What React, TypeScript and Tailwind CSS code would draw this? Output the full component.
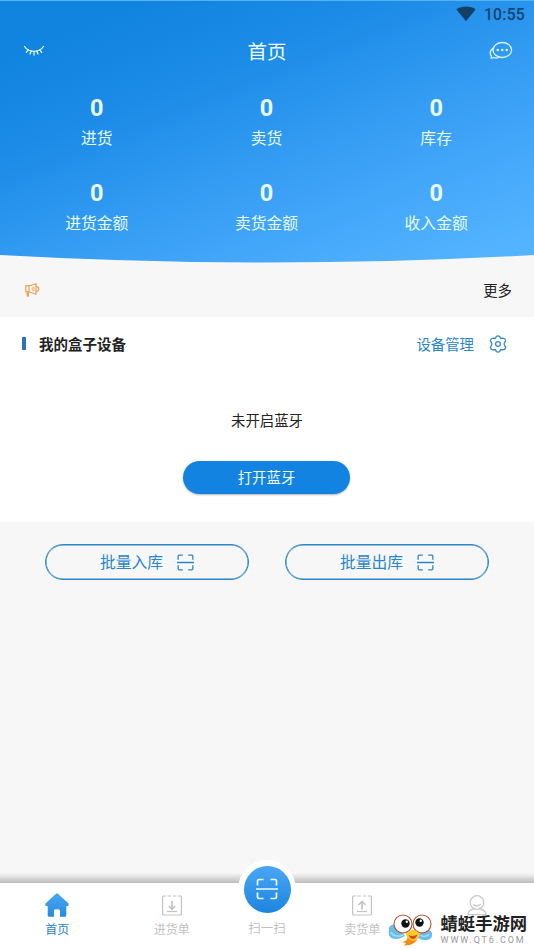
import { clsx } from "clsx";

type IconProps = { className?: string };

type Tab = {
  label: string;
  icon: React.ReactNode;
  active?: boolean;
};

const STATS = [
  { label: "进货", value: 0 },
  { label: "卖货", value: 0 },
  { label: "库存", value: 0 },
  { label: "进货金额", value: 0 },
  { label: "卖货金额", value: 0 },
  { label: "收入金额", value: 0 },
];

function ClosedEyeIcon() {
  return (
    <svg width="22" height="14" viewBox="0 0 22 14" fill="none" stroke="#e8fbff" strokeWidth="1.3" strokeLinecap="round">
      <path d="M1.5 2.500C6 8.900 16 8.900 20.500 2.500" />
      <path d="M5.300 5.800 3.300 8.300M8.300 7l-1.300 3M11 7.400v3.600M13.700 7l1.300 3M16.700 5.800 18.700 8.300" />
    </svg>
  );
}

function ChatIcon() {
  return (
    <svg width="24" height="20" viewBox="0 0 24 20" fill="none" stroke="#d9f5ff" strokeWidth="1.3" strokeLinecap="round" strokeLinejoin="round">
      <ellipse cx="13.300" cy="9" rx="9.300" ry="7.500" />
      <path d="M4.200 7.400C2.200 8.500 1.200 10 1.200 12c0 1.300.5 2.300 1.300 3.200 0 .8-.2 1.400-.5 1.900 1.100.1 2-.2 2.800-.6 1.700.7 4 .6 5.700-.5" />
      <path d="M8.700 9h.1M13.200 9h.1M17.700 9h.1" strokeWidth="2.400" />
    </svg>
  );
}

function WifiIcon() {
  return (
    <svg width="20" height="16" viewBox="0 0 20 16" fill="#123f66">
      <path d="M.3 3.300C5.800-.5 14.200-.5 19.700 3.300L10 15.200Z" />
    </svg>
  );
}

function HornIcon() {
  return (
    <svg width="15" height="14" viewBox="0 0 15 14" fill="none" stroke="#eda255" strokeWidth="1.200" strokeLinejoin="round">
      <path d="M.8 2.700H4V8.800H.8zM4 3 11 .7V11.300L4 8.800" />
      <path d="M2.200 8.800v4.300h1.200V8.800M11 3.400c3.600.6 3.600 4.600 0 5.200" />
      <path d="M9 4.200C6.500 3.700 6.500 8.300 9 7.800M9 4.500v3" strokeWidth="0.900" />
    </svg>
  );
}

function GearIcon() {
  return (
    <svg width="18" height="18" viewBox="0 0 18 18" fill="none" stroke="#3789c5" strokeWidth="1.300" strokeLinejoin="round">
      <path d="M7.300 1.500Q9 .3 10.700 1.500L11.600 3.500 14 3.200Q16.300 3.500 16.700 5.700L15.500 7.700Q14.800 9 15.500 10.300L16.700 12.300Q16.300 14.500 14 14.800L11.600 14.500 10.700 16.500Q9 17.700 7.300 16.500L6.400 14.500 4 14.800Q1.700 14.500 1.300 12.300L2.500 10.300Q3.200 9 2.500 7.700L1.300 5.700Q1.700 3.500 4 3.200L6.400 3.500Z" />
      <circle cx="9" cy="9" r="2.400" />
    </svg>
  );
}

function ScanIcon({ className }: IconProps) {
  return (
    <svg viewBox="0 0 22 22" fill="none" stroke="currentColor" strokeWidth="1.700" className={className}>
      <path d="M1.500 7.500V3Q1.500 1.500 3 1.500H7.500M14.500 1.500H19Q20.500 1.500 20.500 3V7.500M20.500 14.500V19Q20.500 20.500 19 20.500H14.500M7.500 20.500H3Q1.500 20.500 1.500 19V14.500M0 11H22" />
    </svg>
  );
}

function HomeIcon() {
  return (
    <svg width="26" height="26" viewBox="0 0 26 26">
      <defs>
        <linearGradient id="home" x1="0" y1="0" x2="0" y2="1">
          <stop stopColor="#4ba7f3" />
          <stop offset="1" stopColor="#268bdf" />
        </linearGradient>
      </defs>
      <path
        d="M12 1.700Q13 .9 14 1.700L24.300 11.200Q25.500 13.800 23.500 14H22.300V23.200Q22.300 24.700 20.800 24.700H16V18.700Q16 17.200 14.500 17.200H11.500Q10 17.200 10 18.700V24.700H5.200Q3.700 24.700 3.700 23.200V14H2.500Q.5 13.800 1.700 11.200Z"
        fill="url(#home)"
      />
    </svg>
  );
}

function OrderIcon({ up }: { up?: boolean }) {
  return (
    <svg width="20" height="21" viewBox="0 0 20 21" fill="none" stroke="#c3c3c3" strokeWidth="1.200">
      <path d="M4 1H1.500Q.6 1 .6 2V19Q.6 20 1.500 20H18.500Q19.400 20 19.400 19V2Q19.400 1 18.500 1H16M5.500 1H9M11 1H14.500" />
      <path d={up ? "M10 14.500V7M6.500 10 10 6.500 13.500 10" : "M10 6V14M6.800 11 10 14.200 13.200 11"} strokeWidth="1.700" />
      <path d="M5 16.500H15" />
    </svg>
  );
}

function PersonIcon() {
  return (
    <svg width="20" height="21" viewBox="0 0 20 21" fill="none" stroke="#c9c9c9" strokeWidth="1.300" strokeLinecap="round">
      <circle cx="10" cy="7.500" r="6.800" />
      <path d="M6.800 9.500Q10 12.500 13.200 9.500M6.500 14Q1 15.500.8 19.700H19.200Q19 15.500 13.500 14" />
    </svg>
  );
}

function DragonflyLogo() {
  return (
    <svg width="46" height="34" viewBox="0 0 46 34">
      <path d="M8 12C3 11 0 14 1 18c-2 7 6 11 16 5ZM32 18c6-4 13-1 12 4 0 6-9 7-15 2Z" fill="#69bdeb" />
      <path d="M3 19c1 4 7 5 12 3M41 21c-2 3-6 3-9 1" fill="none" stroke="#a5dcf7" strokeWidth="1.500" />
      <path d="M20 23c-1 5-2 5-6 6l4 1-2 2.500c8 0 13-3 14-9Z" fill="#f28a18" />
      <circle cx="15" cy="11" r="9" fill="#fff" stroke="#b4512a" strokeWidth="1.100" />
      <circle cx="34" cy="11" r="9" fill="#fff" stroke="#b4512a" strokeWidth="1.100" />
      <circle cx="17.500" cy="10.500" r="4.200" fill="#111" />
      <circle cx="31.500" cy="9.500" r="4.200" fill="#111" />
      <circle cx="18.800" cy="8.800" r="1.200" fill="#fff" />
      <circle cx="32.800" cy="7.800" r="1.200" fill="#fff" />
      <path d="M18 20Q21 19 23 17 26 16 28 18 31 20 32 20 31 27 25 28 18 26 18 20Z" fill="#ffc928" />
      <path d="M20.500 22Q25 24 29.500 21.500 28 26 25 26 22 26 20.500 22Z" fill="#d94a16" />
    </svg>
  );
}

function BatchButton({ label }: { label: string }) {
  return (
    <button className="flex h-9 w-[204px] items-center justify-center gap-[14px] rounded-full border-[1.5px] border-[#2a86c9] text-[15.8px] text-[#2a86c9] shadow-[inset_0_0_0_0.5px_#2a86c9]">
      <span className="pt-[2px]">{label}</span>
      <ScanIcon className="h-[17px] w-[17px]" />
    </button>
  );
}

const LEFT_TABS: Tab[] = [
  { label: "首页", icon: <HomeIcon />, active: true },
  { label: "进货单", icon: <OrderIcon /> },
];

const RIGHT_TABS: Tab[] = [
  { label: "卖货单", icon: <OrderIcon up /> },
  { label: "", icon: <PersonIcon /> },
];

function TabItem({ label, icon, active }: Tab) {
  return (
    <div className="flex flex-1 flex-col items-center pt-[9px]">
      <div className="flex h-[26px] items-center justify-center">{icon}</div>
      <span className={clsx("mt-[3px] text-[12px] leading-[18px]", active ? "text-[#2583c9]" : "text-[#c2c2c2]")}>
        {label}
      </span>
    </div>
  );
}

export default function App() {
  return (
    <div className="relative flex h-[949px] w-[534px] flex-col overflow-hidden bg-[#f7f7f7] font-[Roboto,'Noto_Sans_CJK_SC',sans-serif] text-[#222]">
      {/* Header */}
      <header className="h-[263px] shrink-0 border-t border-[#54b3f3] bg-[linear-gradient(158deg,#1184e0_12%,#1b8be7_32%,#3da2f7_66%,#53b3ff_94%)] [clip-path:path('M0_0H534V255Q267_270_0_255Z')]">
        <div className="flex h-[26px] items-center justify-end gap-[8px] pr-[9px]">
          <WifiIcon />
          <span className="pt-[2px] text-[15.8px] font-medium tracking-[0.2px] text-[#15466f]">10:55</span>
        </div>
        <div className="grid h-[48px] grid-cols-3 items-center pr-[21px] pl-[23px]">
          <ClosedEyeIcon />
          <h1 className="pt-[4px] pr-[2px] text-center text-[19.5px] text-[#effdff]">首页</h1>
          <div className="flex justify-end">
            <ChatIcon />
          </div>
        </div>
        <div className="grid grid-cols-3 gap-y-[28px] pt-[18px] pr-[13px] pl-[12px]">
          {STATS.map(({ label, value }) => (
            <div key={label} className="flex flex-col items-center text-[#e8fbff]">
              <span className="text-[23.5px] leading-[30px] font-bold">{value}</span>
              <span className="mt-[4px] text-[15.8px] leading-[23px]">{label}</span>
            </div>
          ))}
        </div>
      </header>

      {/* Notice */}
      <div className="flex h-[54px] shrink-0 items-center justify-between pr-[22px] pl-[25px]">
        <HornIcon />
        <span className="pt-[4px] text-[14.4px]">更多</span>
      </div>

      {/* Device */}
      <section className="flex h-[205px] shrink-0 flex-col items-center bg-white">
        <div className="flex h-[54px] w-full items-center pr-[27px] pl-[22px]">
          <div className="mb-px h-[13px] w-1 bg-[#2d73b8]" />
          <h2 className="ml-[13px] flex-1 pt-[3px] text-[14.5px] font-bold">我的盒子设备</h2>
          <span className="mr-[15px] pt-[3px] text-[14.4px] text-[#2a86c9]">设备管理</span>
          <GearIcon />
        </div>
        <p className="mt-[40px] text-[14.4px] leading-[22px]">未开启蓝牙</p>
        <button className="mt-[28px] mr-px h-[33px] w-[167px] rounded-full bg-[#1383e1] pt-[3px] text-[14.4px] text-[#effaff] shadow-[0_1px_2px_rgba(0,0,0,0.3)]">
          打开蓝牙
        </button>
      </section>

      <div className="flex justify-center gap-[36px] pt-[22px]">
        <BatchButton label="批量入库" />
        <BatchButton label="批量出库" />
      </div>

      {/* Bottom tabs */}
      <div className="mt-auto h-[10px] shrink-0 bg-linear-to-b from-[#f7f7f7] to-[#bcbcbc]" />
      <nav className="flex h-[66px] shrink-0 bg-white">
        {LEFT_TABS.map((tab) => (
          <TabItem key={tab.label} {...tab} />
        ))}
        <div className="flex w-[76px] flex-col items-center">
          <div className="relative -mt-[23px] flex h-[58px] w-[58px] shrink-0 items-center justify-center rounded-full bg-white">
            <div className="flex h-[47px] w-[47px] items-center justify-center rounded-full bg-linear-to-b from-[#48a6f5] to-[#1a85df]">
              <ScanIcon className="h-[22px] w-[22px] text-[#effcff]" />
            </div>
          </div>
          <span className="mt-[2px] text-[12.500px] leading-[18px] text-[#c2c2c2]">扫一扫</span>
        </div>
        {RIGHT_TABS.map((tab) => (
          <TabItem key={tab.label} {...tab} />
        ))}
      </nav>

      {/* Site badge */}
      <div className="absolute right-[7px] bottom-[2px] flex items-center gap-[7px]">
        <DragonflyLogo />
        <div className="flex flex-col">
          <span className="text-[17.300px] leading-[20px] font-bold whitespace-nowrap text-[#222]">蜻蜓手游网</span>
          <span className="mt-[1px] text-[9px] leading-[11px] tracking-[1.850px] text-[#999]">WWW.QT6.COM</span>
        </div>
      </div>
    </div>
  );
}
